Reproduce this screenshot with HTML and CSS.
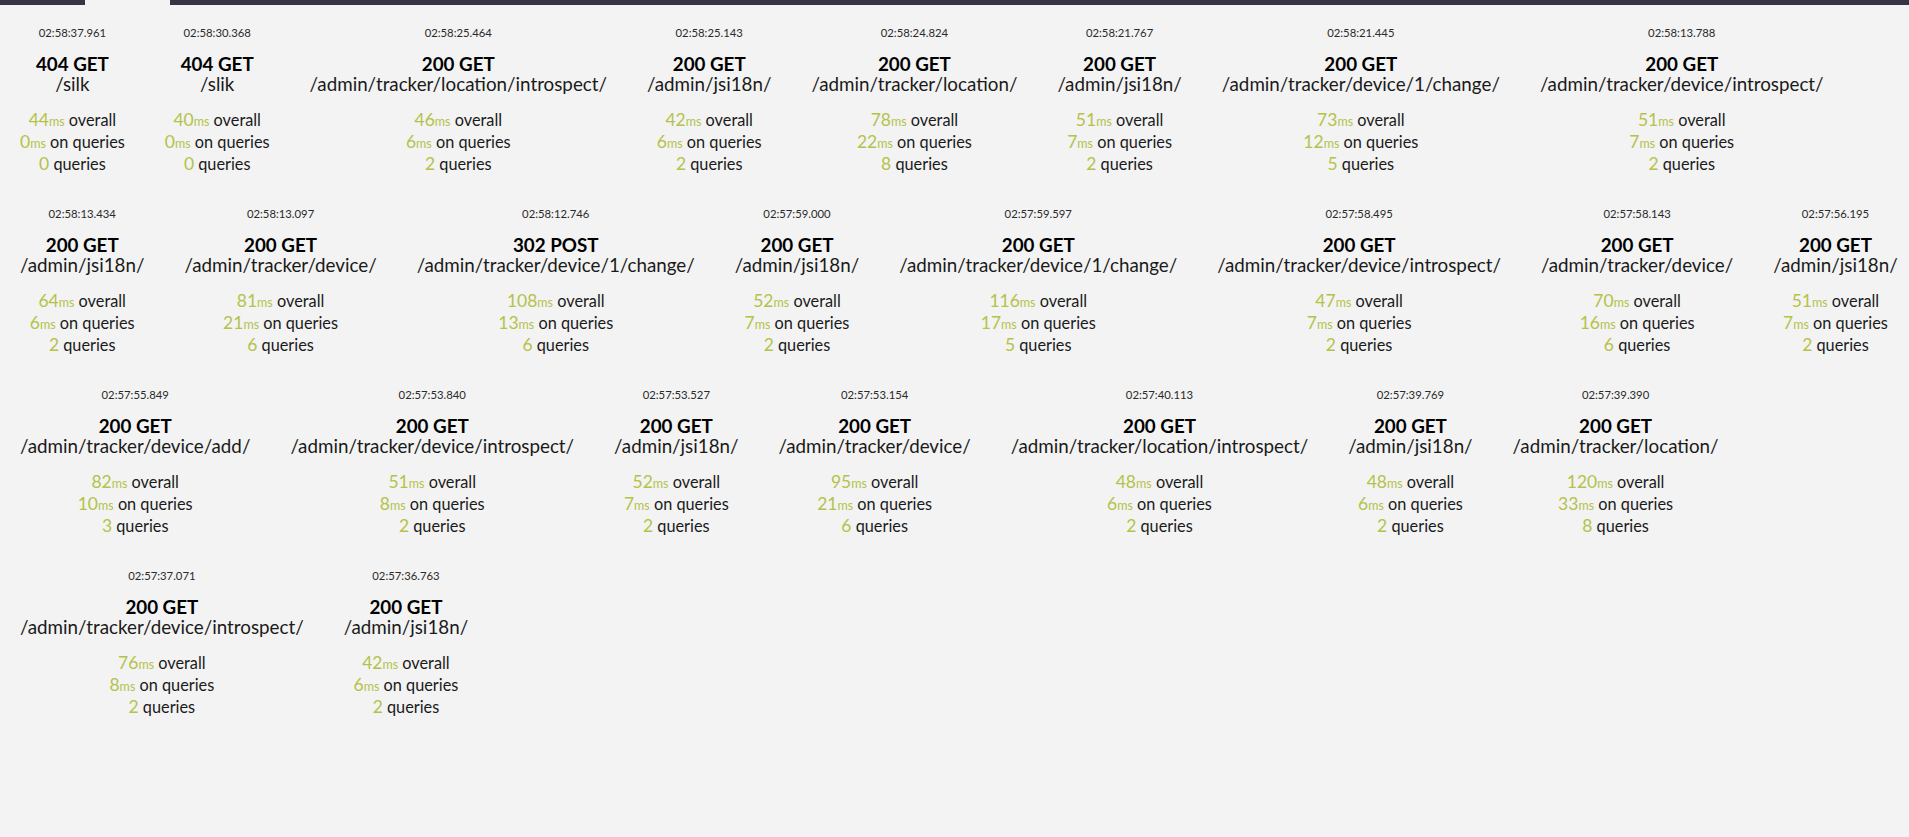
FILE: index.html
```
<!DOCTYPE html>
<html>
<head>
<meta charset="utf-8">
<title>Silk - Requests</title>
<link rel="stylesheet" href="styles.css">
</head>
<body>
<header class="menu">
  <div class="menu-item"></div>
  <div class="menu-item selected"></div>
  <div class="menu-fill"></div>
</header>
<main class="requests">
  <div class="row">
    <div class="req"><div class="ts">02:58:37.961</div><div class="title">404 GET</div><div class="path">/silk</div>
      <div class="stats"><div><span class="num">44</span><span class="unit">ms</span> overall</div><div><span class="num">0</span><span class="unit">ms</span> on queries</div><div><span class="num">0</span> queries</div></div></div>
    <div class="req"><div class="ts">02:58:30.368</div><div class="title">404 GET</div><div class="path">/slik</div>
      <div class="stats"><div><span class="num">40</span><span class="unit">ms</span> overall</div><div><span class="num">0</span><span class="unit">ms</span> on queries</div><div><span class="num">0</span> queries</div></div></div>
    <div class="req"><div class="ts">02:58:25.464</div><div class="title">200 GET</div><div class="path">/admin/tracker/location/introspect/</div>
      <div class="stats"><div><span class="num">46</span><span class="unit">ms</span> overall</div><div><span class="num">6</span><span class="unit">ms</span> on queries</div><div><span class="num">2</span> queries</div></div></div>
    <div class="req"><div class="ts">02:58:25.143</div><div class="title">200 GET</div><div class="path">/admin/jsi18n/</div>
      <div class="stats"><div><span class="num">42</span><span class="unit">ms</span> overall</div><div><span class="num">6</span><span class="unit">ms</span> on queries</div><div><span class="num">2</span> queries</div></div></div>
    <div class="req"><div class="ts">02:58:24.824</div><div class="title">200 GET</div><div class="path">/admin/tracker/location/</div>
      <div class="stats"><div><span class="num">78</span><span class="unit">ms</span> overall</div><div><span class="num">22</span><span class="unit">ms</span> on queries</div><div><span class="num">8</span> queries</div></div></div>
    <div class="req"><div class="ts">02:58:21.767</div><div class="title">200 GET</div><div class="path">/admin/jsi18n/</div>
      <div class="stats"><div><span class="num">51</span><span class="unit">ms</span> overall</div><div><span class="num">7</span><span class="unit">ms</span> on queries</div><div><span class="num">2</span> queries</div></div></div>
    <div class="req"><div class="ts">02:58:21.445</div><div class="title">200 GET</div><div class="path">/admin/tracker/device/1/change/</div>
      <div class="stats"><div><span class="num">73</span><span class="unit">ms</span> overall</div><div><span class="num">12</span><span class="unit">ms</span> on queries</div><div><span class="num">5</span> queries</div></div></div>
    <div class="req"><div class="ts">02:58:13.788</div><div class="title">200 GET</div><div class="path">/admin/tracker/device/introspect/</div>
      <div class="stats"><div><span class="num">51</span><span class="unit">ms</span> overall</div><div><span class="num">7</span><span class="unit">ms</span> on queries</div><div><span class="num">2</span> queries</div></div></div>
  </div>
  <div class="row">
    <div class="req"><div class="ts">02:58:13.434</div><div class="title">200 GET</div><div class="path">/admin/jsi18n/</div>
      <div class="stats"><div><span class="num">64</span><span class="unit">ms</span> overall</div><div><span class="num">6</span><span class="unit">ms</span> on queries</div><div><span class="num">2</span> queries</div></div></div>
    <div class="req"><div class="ts">02:58:13.097</div><div class="title">200 GET</div><div class="path">/admin/tracker/device/</div>
      <div class="stats"><div><span class="num">81</span><span class="unit">ms</span> overall</div><div><span class="num">21</span><span class="unit">ms</span> on queries</div><div><span class="num">6</span> queries</div></div></div>
    <div class="req"><div class="ts">02:58:12.746</div><div class="title">302 POST</div><div class="path">/admin/tracker/device/1/change/</div>
      <div class="stats"><div><span class="num">108</span><span class="unit">ms</span> overall</div><div><span class="num">13</span><span class="unit">ms</span> on queries</div><div><span class="num">6</span> queries</div></div></div>
    <div class="req"><div class="ts">02:57:59.000</div><div class="title">200 GET</div><div class="path">/admin/jsi18n/</div>
      <div class="stats"><div><span class="num">52</span><span class="unit">ms</span> overall</div><div><span class="num">7</span><span class="unit">ms</span> on queries</div><div><span class="num">2</span> queries</div></div></div>
    <div class="req"><div class="ts">02:57:59.597</div><div class="title">200 GET</div><div class="path">/admin/tracker/device/1/change/</div>
      <div class="stats"><div><span class="num">116</span><span class="unit">ms</span> overall</div><div><span class="num">17</span><span class="unit">ms</span> on queries</div><div><span class="num">5</span> queries</div></div></div>
    <div class="req"><div class="ts">02:57:58.495</div><div class="title">200 GET</div><div class="path">/admin/tracker/device/introspect/</div>
      <div class="stats"><div><span class="num">47</span><span class="unit">ms</span> overall</div><div><span class="num">7</span><span class="unit">ms</span> on queries</div><div><span class="num">2</span> queries</div></div></div>
    <div class="req"><div class="ts">02:57:58.143</div><div class="title">200 GET</div><div class="path">/admin/tracker/device/</div>
      <div class="stats"><div><span class="num">70</span><span class="unit">ms</span> overall</div><div><span class="num">16</span><span class="unit">ms</span> on queries</div><div><span class="num">6</span> queries</div></div></div>
    <div class="req"><div class="ts">02:57:56.195</div><div class="title">200 GET</div><div class="path">/admin/jsi18n/</div>
      <div class="stats"><div><span class="num">51</span><span class="unit">ms</span> overall</div><div><span class="num">7</span><span class="unit">ms</span> on queries</div><div><span class="num">2</span> queries</div></div></div>
  </div>
  <div class="row">
    <div class="req"><div class="ts">02:57:55.849</div><div class="title">200 GET</div><div class="path">/admin/tracker/device/add/</div>
      <div class="stats"><div><span class="num">82</span><span class="unit">ms</span> overall</div><div><span class="num">10</span><span class="unit">ms</span> on queries</div><div><span class="num">3</span> queries</div></div></div>
    <div class="req"><div class="ts">02:57:53.840</div><div class="title">200 GET</div><div class="path">/admin/tracker/device/introspect/</div>
      <div class="stats"><div><span class="num">51</span><span class="unit">ms</span> overall</div><div><span class="num">8</span><span class="unit">ms</span> on queries</div><div><span class="num">2</span> queries</div></div></div>
    <div class="req"><div class="ts">02:57:53.527</div><div class="title">200 GET</div><div class="path">/admin/jsi18n/</div>
      <div class="stats"><div><span class="num">52</span><span class="unit">ms</span> overall</div><div><span class="num">7</span><span class="unit">ms</span> on queries</div><div><span class="num">2</span> queries</div></div></div>
    <div class="req"><div class="ts">02:57:53.154</div><div class="title">200 GET</div><div class="path">/admin/tracker/device/</div>
      <div class="stats"><div><span class="num">95</span><span class="unit">ms</span> overall</div><div><span class="num">21</span><span class="unit">ms</span> on queries</div><div><span class="num">6</span> queries</div></div></div>
    <div class="req"><div class="ts">02:57:40.113</div><div class="title">200 GET</div><div class="path">/admin/tracker/location/introspect/</div>
      <div class="stats"><div><span class="num">48</span><span class="unit">ms</span> overall</div><div><span class="num">6</span><span class="unit">ms</span> on queries</div><div><span class="num">2</span> queries</div></div></div>
    <div class="req"><div class="ts">02:57:39.769</div><div class="title">200 GET</div><div class="path">/admin/jsi18n/</div>
      <div class="stats"><div><span class="num">48</span><span class="unit">ms</span> overall</div><div><span class="num">6</span><span class="unit">ms</span> on queries</div><div><span class="num">2</span> queries</div></div></div>
    <div class="req"><div class="ts">02:57:39.390</div><div class="title">200 GET</div><div class="path">/admin/tracker/location/</div>
      <div class="stats"><div><span class="num">120</span><span class="unit">ms</span> overall</div><div><span class="num">33</span><span class="unit">ms</span> on queries</div><div><span class="num">8</span> queries</div></div></div>
  </div>
  <div class="row">
    <div class="req"><div class="ts">02:57:37.071</div><div class="title">200 GET</div><div class="path">/admin/tracker/device/introspect/</div>
      <div class="stats"><div><span class="num">76</span><span class="unit">ms</span> overall</div><div><span class="num">8</span><span class="unit">ms</span> on queries</div><div><span class="num">2</span> queries</div></div></div>
    <div class="req"><div class="ts">02:57:36.763</div><div class="title">200 GET</div><div class="path">/admin/jsi18n/</div>
      <div class="stats"><div><span class="num">42</span><span class="unit">ms</span> overall</div><div><span class="num">6</span><span class="unit">ms</span> on queries</div><div><span class="num">2</span> queries</div></div></div>
  </div>
</main>
</body>
</html>
```
FILE: styles.css
```
html, body {
  margin: 0;
  padding: 0;
}
body {
  background: #f3f3f3;
  min-height: 100vh;
  font-family: "Lato", "Liberation Sans", sans-serif;
  color: #111;
}
.menu {
  display: flex;
  height: 5px;
}
.menu-item {
  width: 85px;
  background: #373545;
}
.menu-item.selected {
  background: #f3f3f3;
}
.menu-fill {
  flex: 1;
  background: #373545;
}
.requests {
  display: flex;
  flex-direction: column;
  row-gap: 32px;
  padding-top: 21px;
}
.row {
  display: flex;
  flex-wrap: nowrap;
}
.req {
  padding: 0 20px;
  text-align: center;
  white-space: nowrap;
}
.ts {
  font-size: 11.3px;
  line-height: 14px;
  font-weight: 400;
  color: #2a2a2a;
  margin-bottom: 14px;
}
.title {
  font-size: 18.8px;
  line-height: 20px;
  font-weight: 700;
  color: #000;
}
.path {
  font-size: 18.8px;
  line-height: 20px;
  font-weight: 400;
  color: #1a1a1a;
}
.stats {
  margin-top: 15px;
  font-size: 16.3px;
  line-height: 22px;
  font-weight: 400;
  color: #1a1a1a;
}
.num {
  font-size: 17.5px;
  line-height: 1;
  color: #b5c24a;
}
.unit {
  font-size: 12.5px;
  line-height: 1;
  color: #b5c24a;
}
```
